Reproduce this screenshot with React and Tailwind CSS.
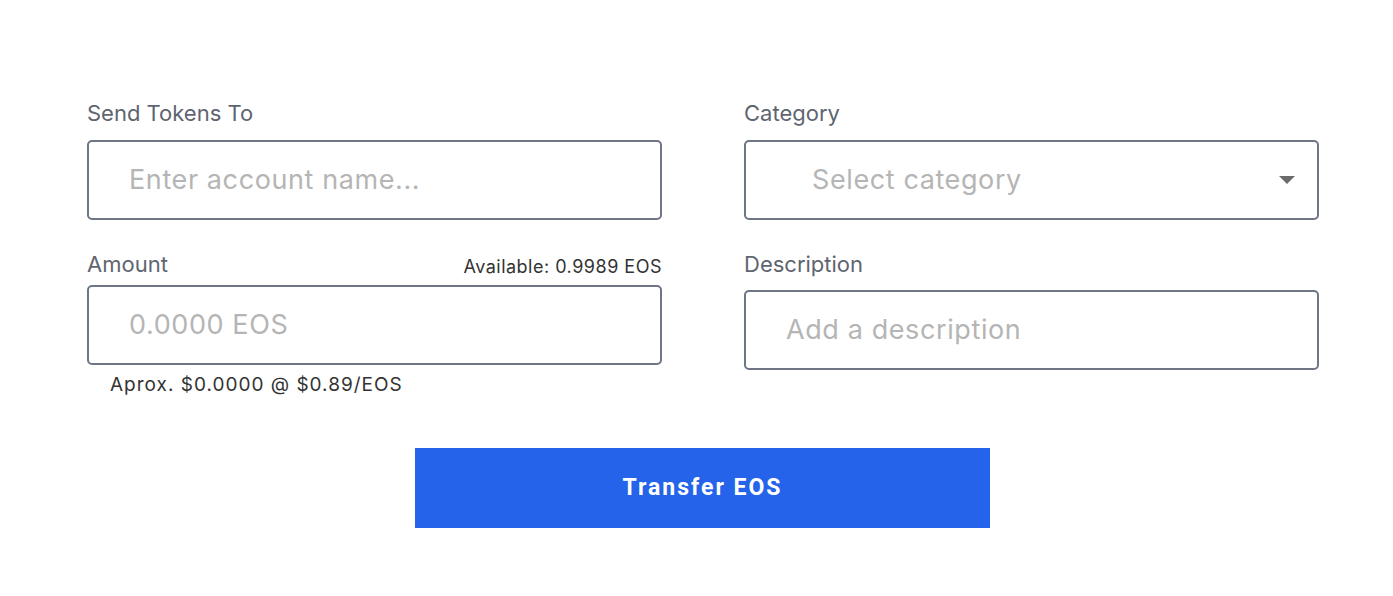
export default function App() {
  const font = { fontFamily: 'Inter, "Noto Sans", sans-serif' }
  return (
    <div className="w-[1393px] h-[596px] bg-white" style={font}>
      <div className="pt-[99px] pl-[87px]">
        <div className="grid grid-cols-[575px_575px] gap-x-[82px]">
          {/* left column */}
          <div className="flex flex-col">
            <label className="text-[22px] leading-[28px] text-[#5f6570]">Send Tokens To</label>
            <div className="mt-[13px] h-[80px] border-2 border-[#6e7585] rounded-[5px] flex items-center pl-[40px]">
              <span className="text-[27px] text-[#b5b5b5] tracking-[0.6px]">Enter account name...</span>
            </div>
            <div className="mt-[30px] flex items-end justify-between h-[28px]">
              <label className="text-[22px] leading-[28px] text-[#5f6570]">Amount</label>
              <span className="text-[18px] leading-[22px] text-[#333] tracking-[0.5px]">Available: 0.9989 EOS</span>
            </div>
            <div className="mt-[7px] h-[80px] border-2 border-[#6e7585] rounded-[5px] flex items-center pl-[40px]">
              <span className="text-[27px] text-[#b5b5b5] tracking-[0.6px]">0.0000 EOS</span>
            </div>
            <div className="mt-[8px] pl-[23px] text-[19px] leading-[24px] text-[#333] tracking-[1px]">Aprox. $0.0000 @ $0.89/EOS</div>
          </div>
          {/* right column */}
          <div className="flex flex-col">
            <label className="text-[22px] leading-[28px] text-[#5f6570]">Category</label>
            <div className="mt-[13px] h-[80px] border-2 border-[#6e7585] rounded-[5px] flex items-center pl-[66px] pr-[22px] justify-between">
              <span className="text-[27px] text-[#b5b5b5] tracking-[0.6px]">Select category</span>
              <svg width="16" height="8" viewBox="0 0 16 8"><path d="M0 0 L16 0 L8 8 Z" fill="#6b6b6b" /></svg>
            </div>
            <label className="mt-[30px] text-[22px] leading-[28px] text-[#5f6570]">Description</label>
            <div className="mt-[12px] h-[80px] border-2 border-[#6e7585] rounded-[5px] flex items-center pl-[40px]">
              <span className="text-[27px] text-[#b5b5b5] tracking-[0.6px]">Add a description</span>
            </div>
          </div>
        </div>
        <div className="mt-[51px] ml-[328px] w-[575px] h-[80px] bg-[#2563eb] flex items-center justify-center">
          <span className="text-white text-[23px] font-bold tracking-[2px]" style={{ fontFamily: 'Roboto, Inter, sans-serif' }}>Transfer EOS</span>
        </div>
      </div>
    </div>
  )
}
